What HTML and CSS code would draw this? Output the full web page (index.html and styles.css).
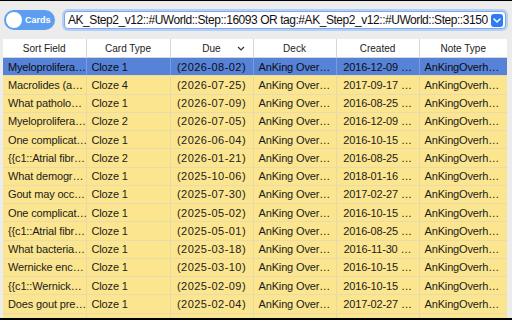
FILE: index.html
```html
<!DOCTYPE html>
<html>
<head>
<meta charset="utf-8">
<link rel="stylesheet" href="styles.css">
</head>
<body>
<div class="window">
  <div class="toolbar">
    <div class="toggle"><span class="knob"></span><span class="toggle-label">Cards</span></div>
    <div class="search">
      <div class="search-inner">
        <span class="search-text">AK_Step2_v12::#UWorld::Step::16093 OR tag:#AK_Step2_v12::#UWorld::Step::3150</span>
        <span class="drop"><svg width="8" height="5" viewBox="0 0 8 5"><path d="M1 1l3 3 3-3" fill="none" stroke="#fff" stroke-width="1.5" stroke-linecap="round" stroke-linejoin="round"/></svg></span>
      </div>
    </div>
  </div>
  <div class="table-area">
    <table class="grid">
      <colgroup>
        <col class="c1"><col class="c2"><col class="c3"><col class="c4"><col class="c5"><col class="c6">
      </colgroup>
      <thead>
        <tr><th>Sort Field</th><th>Card Type</th><th class="sorted">Due<svg class="chev" width="8" height="5" viewBox="0 0 8 5"><path d="M1 1l3 3 3-3" fill="none" stroke="#333" stroke-width="1.2"/></svg></th><th>Deck</th><th>Created</th><th>Note Type</th></tr>
      </thead>
      <tbody>
        <tr class="sel"><td>Myeloprolifera…</td><td>Cloze 1</td><td class="due">(2026-08-02)</td><td>AnKing Over…</td><td class="ctr">2016-12-09 …</td><td>AnKingOverh…</td></tr>
        <tr><td>Macrolides (a…</td><td>Cloze 4</td><td class="due">(2026-07-25)</td><td>AnKing Over…</td><td class="ctr">2017-09-17 …</td><td>AnKingOverh…</td></tr>
        <tr><td>What patholo…</td><td>Cloze 1</td><td class="due">(2026-07-09)</td><td>AnKing Over…</td><td class="ctr">2016-08-25 …</td><td>AnKingOverh…</td></tr>
        <tr><td>Myeloprolifera…</td><td>Cloze 2</td><td class="due">(2026-07-05)</td><td>AnKing Over…</td><td class="ctr">2016-12-09 …</td><td>AnKingOverh…</td></tr>
        <tr><td>One complicat…</td><td>Cloze 1</td><td class="due">(2026-06-04)</td><td>AnKing Over…</td><td class="ctr">2016-10-15 …</td><td>AnKingOverh…</td></tr>
        <tr><td>{{c1::Atrial fibr…</td><td>Cloze 2</td><td class="due">(2026-01-21)</td><td>AnKing Over…</td><td class="ctr">2016-08-25 …</td><td>AnKingOverh…</td></tr>
        <tr><td>What demogr…</td><td>Cloze 1</td><td class="due">(2025-10-06)</td><td>AnKing Over…</td><td class="ctr">2018-01-16 …</td><td>AnKingOverh…</td></tr>
        <tr><td>Gout may occ…</td><td>Cloze 1</td><td class="due">(2025-07-30)</td><td>AnKing Over…</td><td class="ctr">2017-02-27 …</td><td>AnKingOverh…</td></tr>
        <tr><td>One complicat…</td><td>Cloze 1</td><td class="due">(2025-05-02)</td><td>AnKing Over…</td><td class="ctr">2016-10-15 …</td><td>AnKingOverh…</td></tr>
        <tr><td>{{c1::Atrial fibr…</td><td>Cloze 1</td><td class="due">(2025-05-01)</td><td>AnKing Over…</td><td class="ctr">2016-08-25 …</td><td>AnKingOverh…</td></tr>
        <tr><td>What bacteria…</td><td>Cloze 1</td><td class="due">(2025-03-18)</td><td>AnKing Over…</td><td class="ctr">2016-11-30 …</td><td>AnKingOverh…</td></tr>
        <tr><td>Wernicke enc…</td><td>Cloze 1</td><td class="due">(2025-03-10)</td><td>AnKing Over…</td><td class="ctr">2016-10-15 …</td><td>AnKingOverh…</td></tr>
        <tr><td>{{c1::Wernick…</td><td>Cloze 1</td><td class="due">(2025-02-09)</td><td>AnKing Over…</td><td class="ctr">2016-10-15 …</td><td>AnKingOverh…</td></tr>
        <tr><td>Does gout pre…</td><td>Cloze 1</td><td class="due">(2025-02-04)</td><td>AnKing Over…</td><td class="ctr">2017-02-27 …</td><td>AnKingOverh…</td></tr>
        <tr><td>The initial tr…</td><td>Cloze 1</td><td class="due">(2025-01-26)</td><td>AnKing Over…</td><td class="ctr">2017-06-12 …</td><td>AnKingOverh…</td></tr>
      </tbody>
    </table>
  </div>
</div>
</body>
</html>
```
FILE: styles.css
```css
html, body {
  margin: 0;
  padding: 0;
  background: #000;
}
.window {
  width: 512px;
  height: 317px;
  margin-top: 1px;
  background: #ececec;
  overflow: hidden;
  font-family: "Liberation Sans", Arial, sans-serif;
  color: #1a1a1a;
}
.toolbar {
  display: flex;
  align-items: center;
  height: 38px;
  padding: 0 4px 0 4px;
  gap: 7px;
  box-sizing: border-box;
}
.toggle {
  display: flex;
  align-items: center;
  gap: 3px;
  width: 51px;
  height: 20px;
  border-radius: 10px;
  background: #5d9ef0;
  padding-left: 2px;
  box-sizing: border-box;
  flex: none;
}
.knob {
  width: 16px;
  height: 16px;
  border-radius: 50%;
  background: #fff;
  flex: none;
}
.toggle-label {
  color: #fff;
  font-size: 9px;
  font-weight: bold;
}
.search {
  flex: 1;
  min-width: 0;
  height: 22px;
  border-radius: 6px;
  background: #b3cff4;
  padding: 2px;
  box-sizing: border-box;
}
.search-inner {
  display: flex;
  align-items: center;
  height: 100%;
  background: #fff;
  border: 1px solid #7ea9e8;
  border-radius: 4px;
  padding: 0 2px 0 3px;
  justify-content: space-between;
  box-sizing: border-box;
}
.search-text {
  font-size: 12px;
  letter-spacing: -0.45px;
  color: #111;
  white-space: nowrap;
  overflow: hidden;
}
.drop {
  width: 12px;
  height: 13px;
  border-radius: 3px;
  background: #2d7cf6;
  display: flex;
  align-items: center;
  justify-content: center;
  flex: none;
}
.table-area {
  padding-left: 3px;
}
.grid {
  table-layout: fixed;
  border-collapse: collapse;
  width: 504px;
  font-size: 11px;
  letter-spacing: -0.15px;
}
.c1 { width: 83px; }
.c2 { width: 84px; }
.c3 { width: 83px; }
.c4 { width: 83px; }
.c5 { width: 83px; }
.c6 { width: 88px; }
th {
  background: #fff;
  height: 18px;
  padding: 0;
  font-weight: normal;
  font-size: 10px;
  letter-spacing: 0;
  color: #222;
  border-left: 1px solid #d6d6d6;
  border-bottom: 1px solid #d6d6d6;
  position: relative;
}
th:first-child { border-left: none; }
.chev {
  position: absolute;
  right: 8px;
  top: 7px;
}
td {
  height: 17.25px;
  padding: 0 1px 0 5px;
  background: #fbe58f;
  border-left: 1px solid #e6d9a6;
  border-bottom: 1px solid #e8dcae;
  white-space: nowrap;
  overflow: hidden;
  color: #1c1c1c;
}
td:first-child { border-left: none; }
td.ctr { text-align: center; padding: 0 1px; }
td.due { text-align: center; padding: 0 1px; letter-spacing: 0.45px; }
tr.sel td {
  background: #5682d8;
  color: #0d0d0d;
  border-left-color: #7b9bdc;
}
```
